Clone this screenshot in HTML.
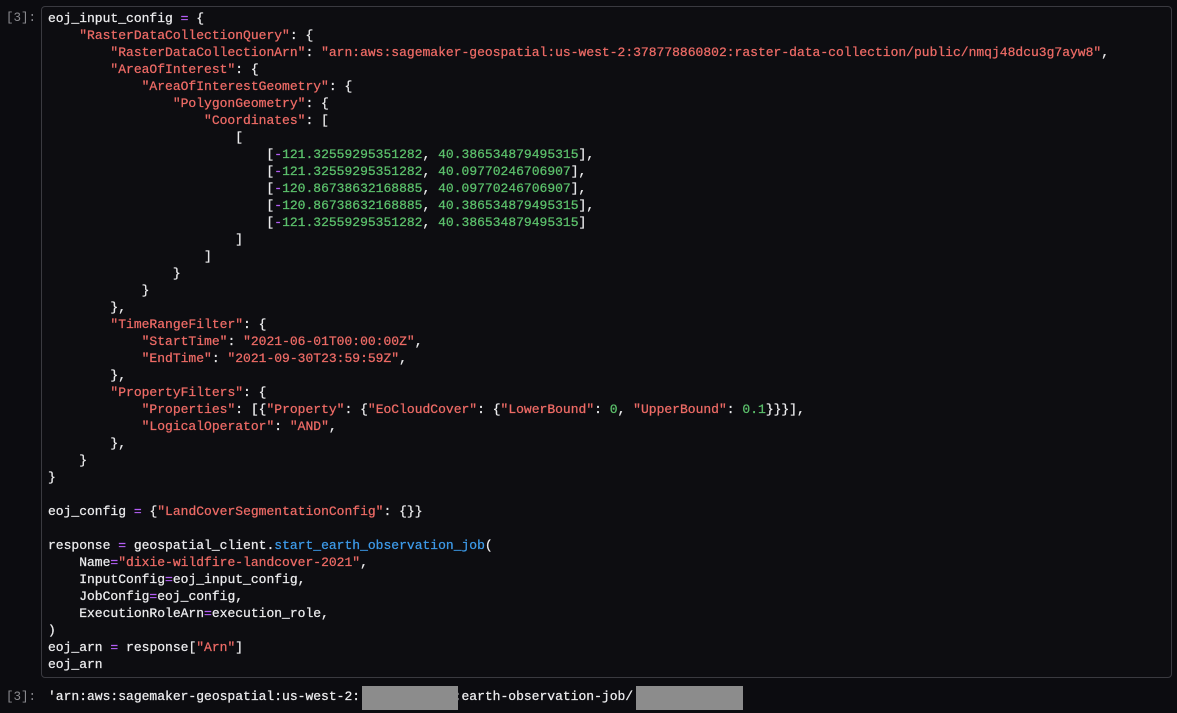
<!DOCTYPE html>
<html><head><meta charset="utf-8"><style>
html,body{margin:0;padding:0;background:#0c0c10;width:1177px;height:713px;overflow:hidden}
body{font-family:"Liberation Mono",monospace;font-size:13px;color:#ececee;-webkit-text-stroke:0.25px currentColor}
.p{position:absolute;left:6px;color:#8b8b90;font-size:12.5px;-webkit-text-stroke:0}
.box{position:absolute;left:41px;top:6px;width:1131px;height:672px;border:1px solid #3a3a40;border-radius:4px;background:#0d0d11;box-sizing:border-box}
pre{margin:0;position:absolute;left:48px;top:10px;font:inherit;line-height:17px;white-space:pre}
.s{color:#ee6b66}.n{color:#5cc16c}.o{color:#b45ff5}.f{color:#3d9bea}
.out{position:absolute;left:48px;top:688px;line-height:17px;white-space:pre}
.g{position:absolute;background:#8c8c8c;top:686px;height:24px}
</style></head><body>
<div class="p" style="top:11px">[3]:</div>
<div class="box"></div>
<pre>eoj_input_config <span class="o">=</span> {
    <span class="s">"RasterDataCollectionQuery"</span>: {
        <span class="s">"RasterDataCollectionArn"</span>: <span class="s">"arn:aws:sagemaker-geospatial:us-west-2:378778860802:raster-data-collection/public/nmqj48dcu3g7ayw8"</span>,
        <span class="s">"AreaOfInterest"</span>: {
            <span class="s">"AreaOfInterestGeometry"</span>: {
                <span class="s">"PolygonGeometry"</span>: {
                    <span class="s">"Coordinates"</span>: [
                        [
                            [<span class="o">-</span><span class="n">121.32559295351282</span>, <span class="n">40.386534879495315</span>],
                            [<span class="o">-</span><span class="n">121.32559295351282</span>, <span class="n">40.09770246706907</span>],
                            [<span class="o">-</span><span class="n">120.86738632168885</span>, <span class="n">40.09770246706907</span>],
                            [<span class="o">-</span><span class="n">120.86738632168885</span>, <span class="n">40.386534879495315</span>],
                            [<span class="o">-</span><span class="n">121.32559295351282</span>, <span class="n">40.386534879495315</span>]
                        ]
                    ]
                }
            }
        },
        <span class="s">"TimeRangeFilter"</span>: {
            <span class="s">"StartTime"</span>: <span class="s">"2021-06-01T00:00:00Z"</span>,
            <span class="s">"EndTime"</span>: <span class="s">"2021-09-30T23:59:59Z"</span>,
        },
        <span class="s">"PropertyFilters"</span>: {
            <span class="s">"Properties"</span>: [{<span class="s">"Property"</span>: {<span class="s">"EoCloudCover"</span>: {<span class="s">"LowerBound"</span>: <span class="n">0</span>, <span class="s">"UpperBound"</span>: <span class="n">0.1</span>}}}],
            <span class="s">"LogicalOperator"</span>: <span class="s">"AND"</span>,
        },
    }
}

eoj_config <span class="o">=</span> {<span class="s">"LandCoverSegmentationConfig"</span>: {}}

response <span class="o">=</span> geospatial_client.<span class="f">start_earth_observation_job</span>(
    Name<span class="o">=</span><span class="s">"dixie-wildfire-landcover-2021"</span>,
    InputConfig<span class="o">=</span>eoj_input_config,
    JobConfig<span class="o">=</span>eoj_config,
    ExecutionRoleArn<span class="o">=</span>execution_role,
)
eoj_arn <span class="o">=</span> response[<span class="s">"Arn"</span>]
eoj_arn</pre>
<div class="p" style="top:690px">[3]:</div>
<div class="out">'arn:aws:sagemaker-geospatial:us-west-2:            :earth-observation-job/</div>
<div class="g" style="left:362px;width:96px"></div>
<div class="g" style="left:636px;width:107px"></div>
</body></html>
